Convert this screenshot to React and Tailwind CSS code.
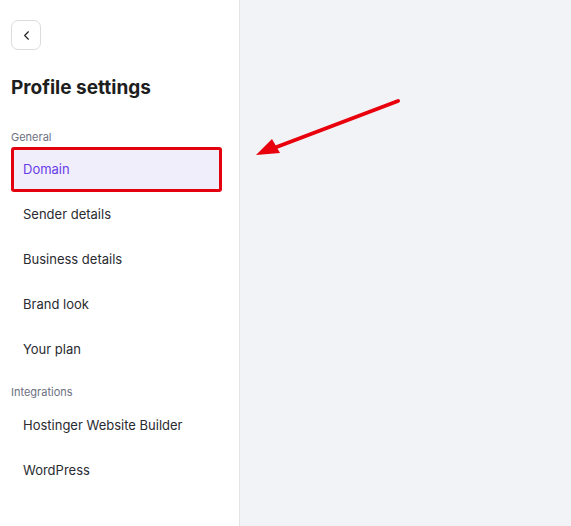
import { ChevronLeft } from "lucide-react";

const general = ["Domain", "Sender details", "Business details", "Brand look", "Your plan"];
const integrations = ["Hostinger Website Builder", "WordPress"];

function NavItem({ label, active }) {
  if (active) {
    return (
      <div className="h-[45px] flex items-center px-[9px] border-[3px] border-[#e3000f] rounded-[3px] bg-[#f1eefc] text-[#673de6]">
        {label}
      </div>
    );
  }
  return <div className="h-[45px] flex items-center px-[12px] text-[#2a2b30]">{label}</div>;
}

export default function App() {
  return (
    <div className="flex h-[526px] w-[571px] overflow-hidden font-['Inter',sans-serif] text-[13px]">
      <aside className="w-[240px] shrink-0 bg-white border-r border-[#e4e4e7] pl-[11px] pr-[17px] pt-[20px]">
        <button className="w-[30px] h-[30px] flex items-center justify-center rounded-[7px] border border-[#dadce0] text-[#1d1e20]">
          <ChevronLeft size={15} strokeWidth={1.75} />
        </button>
        <h1 className="mt-[26px] text-[19px] font-bold text-[#1d1e20] leading-[24px]">Profile settings</h1>

        <div className="mt-[30px] text-[11px] text-[#6d7081] leading-[14px]">General</div>
        <div className="mt-[3px] flex flex-col">
          {general.map((g) => (
            <NavItem key={g} label={g} active={g === "Domain"} />
          ))}
        </div>

        <div className="mt-[13px] text-[11px] text-[#6d7081] leading-[14px]">Integrations</div>
        <div className="mt-[4px] flex flex-col">
          {integrations.map((g) => (
            <NavItem key={g} label={g} />
          ))}
        </div>
      </aside>
      <main className="flex-1 bg-[#f2f3f6] relative">
        <svg className="absolute left-0 top-0" width="331" height="526" viewBox="240 0 331 526">
          <line x1="398" y1="101" x2="274" y2="148" stroke="#e8000c" strokeWidth="4" strokeLinecap="round" />
          <polygon points="256,155 272,139 280,153" fill="#e8000c" />
        </svg>
      </main>
    </div>
  );
}
